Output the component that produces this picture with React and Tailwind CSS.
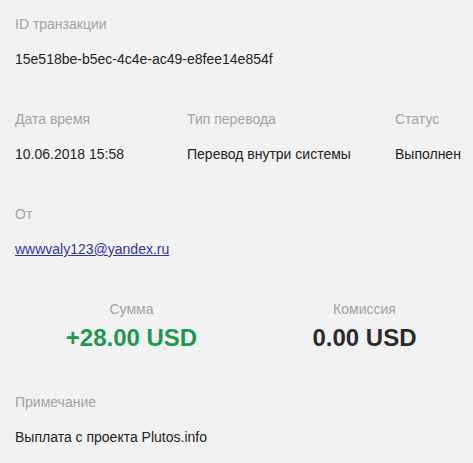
export default function App() {
  return (
    <div className="min-h-[463px] w-full overflow-hidden bg-[#f2f2f2] px-[15px] pt-[14px] font-['Liberation_Sans',Arial,sans-serif] text-[14px] leading-[20px] text-[#222]">
      {/* ID */}
      <div className="mb-[40px]">
        <div className="text-[#a3a3a3]">ID транзакции</div>
        <div className="mt-[15px]">15e518be-b5ec-4c4e-ac49-e8fee14e854f</div>
      </div>

      {/* дата / тип / статус */}
      <div className="mb-[40px] flex">
        <div className="w-[172px] shrink-0">
          <div className="text-[#a3a3a3]">Дата время</div>
          <div className="mt-[15px]">10.06.2018 15:58</div>
        </div>
        <div className="w-[208px] shrink-0">
          <div className="text-[#a3a3a3]">Тип перевода</div>
          <div className="mt-[15px]">Перевод внутри системы</div>
        </div>
        <div className="shrink-0">
          <div className="text-[#a3a3a3]">Статус</div>
          <div className="mt-[15px]">Выполнен</div>
        </div>
      </div>

      {/* от */}
      <div className="mb-[40px]">
        <div className="text-[#a3a3a3]">От</div>
        <div className="mt-[15px]">
          <a href="#" className="text-[#3333aa] underline">wwwvaly123@yandex.ru</a>
        </div>
      </div>

      {/* сумма */}
      <div className="mb-[40px] flex">
        <div className="flex w-[233px] shrink-0 flex-col items-center">
          <div className="text-[#a3a3a3]">Сумма</div>
          <div className="mt-[5px] text-[24px] font-bold leading-[28px] text-[#1e9650]">+28.00 USD</div>
        </div>
        <div className="flex w-[233px] shrink-0 flex-col items-center">
          <div className="text-[#a3a3a3]">Комиссия</div>
          <div className="mt-[5px] text-[24px] font-bold leading-[28px] text-[#2a2a2a]">0.00 USD</div>
        </div>
      </div>

      {/* примечание */}
      <div>
        <div className="text-[#a3a3a3]">Примечание</div>
        <div className="mt-[15px]">Выплата с проекта Plutos.info</div>
      </div>
    </div>
  );
}
